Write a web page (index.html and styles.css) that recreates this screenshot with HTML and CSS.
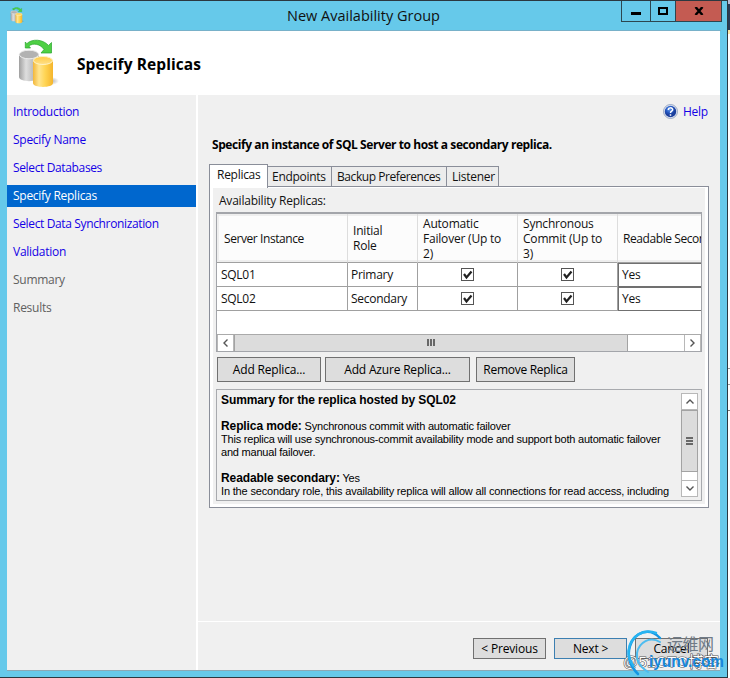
FILE: index.html
```html
<!DOCTYPE html>
<html lang="en">
<head>
<meta charset="utf-8">
<title>New Availability Group</title>
<link rel="stylesheet" href="styles.css">
</head>
<body>
<svg class="defs" width="0" height="0" aria-hidden="true">
  <defs>
    <linearGradient id="grey"><stop offset="0" stop-color="#9f9f9f"/><stop offset=".35" stop-color="#dedede"/><stop offset="1" stop-color="#a3a3a3"/></linearGradient>
    <linearGradient id="gold"><stop offset="0" stop-color="#f3b73a"/><stop offset=".3" stop-color="#ffe591"/><stop offset=".6" stop-color="#ffd555"/><stop offset="1" stop-color="#f5b52c"/></linearGradient>
    <linearGradient id="goldtop" x2="0" y2="1"><stop offset="0" stop-color="#ffcb45"/><stop offset="1" stop-color="#ffe08a"/></linearGradient>
    <radialGradient id="shade"><stop offset="0" stop-color="#777" stop-opacity=".6"/><stop offset="1" stop-color="#777" stop-opacity="0"/></radialGradient>
    <radialGradient id="ball" cx=".4" cy=".3"><stop offset="0" stop-color="#6da3ee"/><stop offset=".6" stop-color="#2458c4"/><stop offset="1" stop-color="#1b3f9c"/></radialGradient>
    <symbol id="replica" viewBox="0 0 42 50">
      <ellipse cx="33" cy="42" rx="8" ry="4" fill="url(#shade)"/>
      <path d="M1 15.500v22.500c0 5.500 20 5.500 20 0V15.500z" fill="url(#grey)"/>
      <ellipse cx="11" cy="15.500" rx="9.700" ry="4.300" fill="#b2b2b2" stroke="#ececec"/>
      <path d="M15 21.500v22.500c0 5.200 20 5.200 20 0V21.500z" fill="url(#gold)"/>
      <ellipse cx="25" cy="21.500" rx="9.600" ry="4" fill="url(#goldtop)" stroke="#fff3c4"/>
      <path d="M7.300 3v6h5.200l-1.600-1.900C15 3.500 22.500 5 26 10.500L23 14h10.500V3.500l-3 2.900C25 .2 14-.6 8.800 4.700z" fill="#4ed044" stroke="#27a52c" stroke-width=".7"/>
    </symbol>
  </defs>
</svg>
<div class="desktop">
  <div class="window">
    <header class="titlebar">
      <svg class="app-icon"><use href="#replica"/></svg>
      <h1 class="caption">New Availability Group</h1>
      <div class="controls">
        <span class="ctl min"><svg width="10" height="9"><path d="M0 5h10v3H0z"/></svg></span>
        <span class="ctl max"><svg width="10" height="8"><path d="M1 1h8v6H1z" fill="none" stroke="#000" stroke-width="2"/></svg></span>
        <span class="ctl close"><svg width="10" height="8"><path d="M1.500 0L8.500 8M8.500 0L1.500 8" stroke="#000" stroke-width="2.400"/></svg></span>
      </div>
    </header>
    <div class="client">
      <div class="banner">
        <svg class="banner-icon"><use href="#replica"/></svg>
        <h2>Specify Replicas</h2>
      </div>
      <div class="body">
        <nav class="steps">
          <a class="step">Introduction</a>
          <a class="step">Specify Name</a>
          <a class="step tight">Select Databases</a>
          <a class="step current">Specify Replicas</a>
          <a class="step tight">Select Data Synchronization</a>
          <a class="step">Validation</a>
          <a class="step pending">Summary</a>
          <a class="step pending">Results</a>
        </nav>
        <main class="page">
          <div class="help">
            <svg width="15" height="15" viewBox="0 0 15 15"><circle cx="7.500" cy="7.500" r="7" fill="#dfe6f2" stroke="#8698ba" stroke-width=".8"/><circle cx="7.500" cy="7.500" r="5.700" fill="url(#ball)"/><path d="M5.300 6C5.300 3.200 9.700 3.200 9.700 5.800 9.700 7.300 7.500 7.200 7.500 9M7.500 10.200v1.500" fill="none" stroke="#fff" stroke-width="1.500"/></svg>
            <a>Help</a>
          </div>
          <p class="lead">Specify an instance of SQL Server to host a secondary replica.</p>
          <div class="tabs">
            <span class="tab t1 active">Replicas</span><span class="tab t2">Endpoints</span><span class="tab t3">Backup Preferences</span><span class="tab t4">Listener</span>
          </div>
          <section class="panel">
            <div class="inner">
              <p class="grid-label">Availability Replicas:</p>
              <div class="grid">
                <div class="row head">
                  <span class="cell"><b>Server Instance</b></span>
                  <span class="cell"><b>Initial<br>Role</b></span>
                  <span class="cell"><b>Automatic<br>Failover (Up to<br>2)</b></span>
                  <span class="cell"><b>Synchronous<br>Commit (Up to<br>3)</b></span>
                  <span class="cell last"><b>Readable Secondary</b></span>
                </div>
                <div class="row">
                  <span class="cell">SQL01</span><span class="cell">Primary</span>
                  <span class="cell mid"><svg class="check"><path d="M3 5.500L5.500 9 10.500 3"/></svg></span>
                  <span class="cell mid"><svg class="check"><path d="M3 5.500L5.500 9 10.500 3"/></svg></span>
                  <span class="cell combo">Yes</span>
                </div>
                <div class="row">
                  <span class="cell">SQL02</span><span class="cell">Secondary</span>
                  <span class="cell mid"><svg class="check"><path d="M3 5.500L5.500 9 10.500 3"/></svg></span>
                  <span class="cell mid"><svg class="check"><path d="M3 5.500L5.500 9 10.500 3"/></svg></span>
                  <span class="cell combo">Yes</span>
                </div>
                <div class="hscroll">
                  <span class="arrow"><svg width="7" height="8"><path d="M5.500 .5L2 4l3.500 3.500"/></svg></span>
                  <span class="thumb"><i></i><i></i><i></i></span>
                  <span class="track"></span>
                  <span class="arrow"><svg width="7" height="8"><path d="M1.500 .5L5 4 1.500 7.500"/></svg></span>
                </div>
              </div>
              <div class="actions">
                <button class="b1">Add Replica...</button>
                <button class="b2">Add Azure Replica...</button>
                <button class="b3">Remove Replica</button>
              </div>
              <div class="summary">
                <div class="text">
                  <p><b>Summary for the replica hosted by SQL02</b></p>
                  <p>&nbsp;</p>
                  <p><b>Replica mode:</b> Synchronous commit with automatic failover</p>
                  <p>This replica will use synchronous-commit availability mode and support both automatic failover</p>
                  <p>and manual failover.</p>
                  <p>&nbsp;</p>
                  <p><b>Readable secondary:</b> Yes</p>
                  <p class="wide">In the secondary role, this availability replica will allow all connections for read access, including</p>
                </div>
                <div class="vscroll">
                  <span class="arrow"><svg width="8" height="7"><path d="M.5 5.500L4 2l3.500 3.500"/></svg></span>
                  <span class="thumb"><i></i><i></i><i></i></span>
                  <span class="track"></span>
                  <span class="arrow"><svg width="8" height="7"><path d="M.5 1.500L4 5l3.500-3.500"/></svg></span>
                </div>
              </div>
            </div>
          </section>
          <footer class="footer">
            <button>&lt; Previous</button>
            <button class="default">Next &gt;</button>
            <button>Cancel</button>
          </footer>
        </main>
      </div>
    </div>
  </div>
  <aside class="behind"><i class="navy"></i><i class="yellow"></i><i class="white"></i></aside>
  <svg class="mark" width="120" height="60" viewBox="0 0 120 60">
    <text class="blog" x="13" y="49" textLength="96">@51CTO博客</text>
    <g fill="none" stroke-linecap="round">
      <path d="M50 20C40 9 25 13 20 28c-3 10 0 20 8 28" stroke="#1497e4" stroke-width="2.500"/>
      <path d="M46 15C34 10 20 18 18.500 33c0 6 2 11 5 15" stroke="#27b4f1" stroke-width="2.500"/>
      <path d="M50 24C40 18 29 24 27 35c-1 7 3 14 11 19" stroke="#4dbcf0" stroke-width="2"/>
    </g>
    <text class="cn" x="57" y="32" textLength="47">运维网</text>
    <text class="site" x="39" y="49" textLength="75" lengthAdjust="spacingAndGlyphs">iyunv.com</text>
  </svg>
</div>
</body>
</html>
```

FILE: styles.css
```css
* { box-sizing: border-box; }
body { margin: 0; overflow: hidden; font: 12px/15px "Open Sans", "Noto Sans", sans-serif; color: #111; letter-spacing: -.28px; }
h1, h2, p { margin: 0; font-weight: normal; }
svg { display: block; flex: none; }
.defs { position: absolute; }
.desktop { position: relative; display: flex; width: 730px; height: 678px; }
.window { width: 728px; padding-left: 7px; padding-right: 7px; background: #66c9ea; border: solid #2b3840; border-width: 1px 1px 1px 0; }
.titlebar { display: flex; align-items: flex-start; height: 30px; width: 714px; border-bottom: 1px solid #78b1c9; }
.app-icon { width: 15px; height: 17px; margin: 6px 0 0 3px; }
.caption { flex: 1; margin-left: 262px; padding-top: 5px; font-size: 14.5px; line-height: 20px; letter-spacing: 0; }
.controls { display: flex; width: 101px; height: 21px; margin-right: -1px; border: 1px solid #2c4650; border-top: 0; }
.ctl { display: flex; align-items: center; justify-content: center; width: 28px; }
.max { width: 26px; border: solid #2c4650; border-width: 0 1px; }
.close { width: 45px; background: #c45b52; }
.client { width: 713px; height: 640px; border-bottom: 1px solid #8ba9b6; background: #fff; }
.banner { display: flex; height: 64px; }
.banner-icon { width: 42px; height: 50px; margin: 8px 0 0 11px; }
.banner h2 { margin: 23px 0 0 17px; font: bold 15.5px/20px "Open Sans", sans-serif; color: #000; letter-spacing: .08px; }
.body { display: flex; gap: 2px; height: 575px; }
.steps { width: 189px; padding-top: 6px; background: #f0f0f0; }
.step { display: block; height: 22px; margin-bottom: 6px; padding-left: 6px; line-height: 22px; color: #1400e6; letter-spacing: -.27px; }
.tight { letter-spacing: -.36px; }
.current { background: #0067ce; color: #fff; }
.pending { color: #606060; }
.page { display: flex; flex-direction: column; width: 522px; background: #f0f0f0; }
.help { display: flex; gap: 5px; height: 42px; padding: 9px 0 0 465px; color: #1400e6; }
.lead { height: 27px; padding-left: 14px; font-weight: bold; letter-spacing: -.42px; color: #000; white-space: nowrap; }
.tabs { position: relative; z-index: 1; display: flex; align-items: flex-end; height: 23px; margin-left: 11px; }
.tab { height: 21px; padding: 2px 0 0 4px; border: 1px solid #8a8e99; border-left: 0; background: #ececec; white-space: nowrap; }
.tab.active { height: 24px; margin-bottom: -1px; padding: 2px 0 0 7px; border-left: 1px solid #8a8e99; border-bottom: 0; background: #fff; }
.t1 { width: 59px; } .t2 { width: 64px; } .t3 { width: 115px; } .t4 { width: 52px; }
.tab.t3, .tab.t4 { padding-left: 5px; }
.t3 { letter-spacing: -.43px; }
.panel { width: 500px; height: 322px; margin: -1px 0 0 11px; padding: 1px 3px 3px; border: 1px solid #8a8e99; background: #fff; }
.inner { height: 316px; padding: 5px 3px 0; background: #f0f0f0; }
.grid-label { height: 19px; padding-left: 3px; letter-spacing: -.22px; }
.grid { display: flex; flex-direction: column; width: 486px; height: 140px; border: 1px solid #a3a5aa; border-top-width: 2px; background: #fff; overflow: hidden; }
.row { display: grid; grid-template-columns: 131px 70px 100px 100px 83px; height: 24px; }
.cell { display: flex; align-items: center; padding-left: 3px; border: solid #a0a0a0; border-width: 0 1px 1px 0; white-space: nowrap; overflow: hidden; }
.cell:first-child { padding-left: 4px; }
.cell:last-child { border-right: 0; }
.head { height: 49px; }
.head .cell { padding: 2px 0; border-right-color: #ddd; background: #eee; }
.head .cell:first-child { padding-left: 2px; }
.head b { display: flex; align-items: center; width: 100%; height: 100%; padding-left: 5px; background: #fcfcfc; font-weight: normal; letter-spacing: -.2px; }
.head .cell:first-child b, .head .last b { letter-spacing: -.42px; }
.mid { justify-content: center; padding: 0; }
.check { width: 13px; height: 13px; border: 1px solid #555; background: #fff; }
.check path { fill: none; stroke: #202020; stroke-width: 2.200; transform: translate(-1px, -.5px); }
.row .combo { padding-bottom: 1px; border: 1px solid #707070; border-right: 0; }
.hscroll { display: flex; height: 17px; margin-top: auto; border-top: 1px solid #aaa; }
.arrow { display: flex; align-items: center; justify-content: center; width: 17px; height: 17px; background: #fff; border: 1px solid #b8b8b8; }
.arrow path { fill: none; stroke: #555; stroke-width: 1.400; }
.hscroll .arrow { border-width: 0 1px; height: 16px; padding-bottom: 1px; }
.thumb { display: flex; align-items: center; justify-content: center; gap: 1px; background: #dcdcdc; border: 1px solid #a3a3a3; }
.hscroll .thumb { width: 394px; height: 16px; padding-bottom: 1px; border-width: 0 1px; }
.hscroll i { width: 2px; height: 7px; background: #686868; }
.hscroll .track { flex: 1; }
.actions { display: flex; height: 37px; padding: 5px 0 0 1px; }
button { height: 25px; padding: 0; border: 1px solid #707070; background: #ddd; color: #000; font: inherit; letter-spacing: -.18px; }
.b1 { width: 104px; } .b2 { width: 145px; margin: 0 6px 0 4px; } .b3 { width: 99px; }
.b3 { letter-spacing: -.28px; }
.summary { display: flex; width: 486px; height: 112px; border: 1px solid #a8aaae; overflow: hidden; }
.text { width: 464px; padding: 4px 0 0 4px; font: 11px/13px "Liberation Sans", Arial, sans-serif; letter-spacing: -.21px; color: #000; white-space: nowrap; }
.text b { font-size: 12px; letter-spacing: -.1px; }
.text p { height: 13px; }
.text .wide { letter-spacing: -.17px; }
.vscroll { display: flex; flex-direction: column; width: 17px; height: 104px; margin-top: 3px; background: #fff; }
.vscroll .thumb { flex-direction: column; height: 62px; }
.vscroll .track { flex: 1; border: solid #b8b8b8; border-width: 0 1px; }
.vscroll i { width: 7px; height: 2px; background: #686868; }
.footer { display: flex; gap: 8px; height: 49px; margin-top: auto; padding: 16px 0 0 275px; border-top: 1px solid #fff; }
.footer button { width: 73px; height: 21px; line-height: 15px; }
.footer .default { border-color: #3c7fb1; }
.behind { display: flex; flex-direction: column; width: 2px; background: #b9bcd6; padding-top: 4px; }
.navy { height: 26px; background: #293a56; }
.yellow { height: 4px; background: #ffe8a6; }
.white { flex: 1; background: linear-gradient(#999, #999) 0 334px / 2px 1px no-repeat, linear-gradient(#999, #999) 0 350px / 2px 1px no-repeat, linear-gradient(#777, #777) 0 376px / 2px 1px no-repeat, #fff; }
.mark { position: absolute; left: 610px; top: 618px; letter-spacing: 0; }
.blog { font: 15px "Liberation Sans", "Noto Sans CJK SC", sans-serif; fill: #fff; stroke: #555; stroke-width: 1.200px; paint-order: stroke; }
.cn { font: 16px "Noto Sans CJK SC", sans-serif; fill: #6f7a86; }
.site { font: bold 16px "Liberation Sans", sans-serif; fill: #1687dc; }
```
